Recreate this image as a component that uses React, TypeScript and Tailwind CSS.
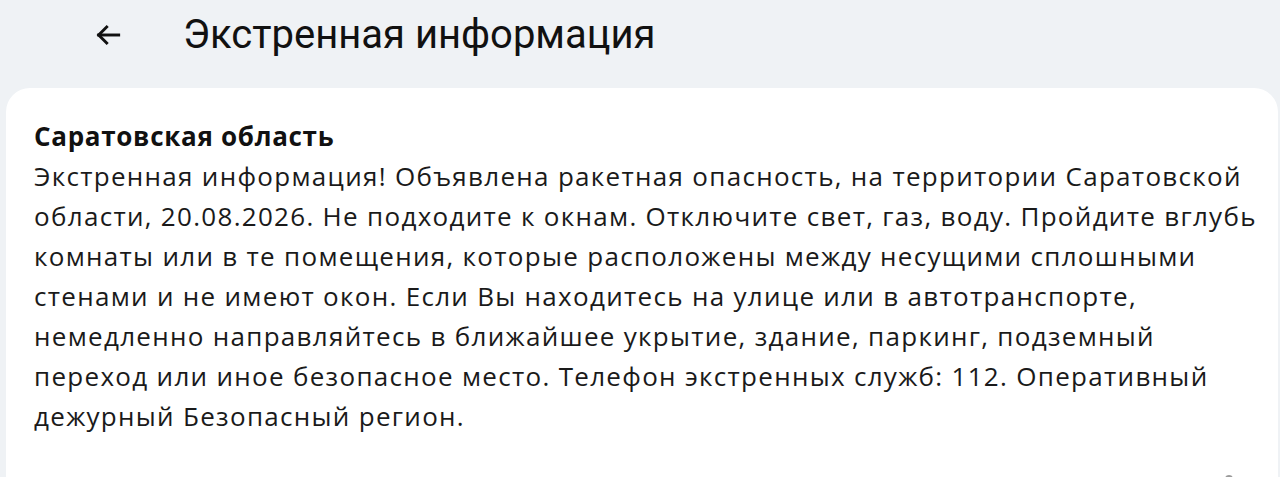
import React from 'react';

const lines = [
  'Экстренная информация! Объявлена ракетная опасность, на территории Саратовской',
  'области, 20.08.2026. Не подходите к окнам. Отключите свет, газ, воду. Пройдите вглубь',
  'комнаты или в те помещения, которые расположены между несущими сплошными',
  'стенами и не имеют окон. Если Вы находитесь на улице или в автотранспорте,',
  'немедленно направляйтесь в ближайшее укрытие, здание, паркинг, подземный',
  'переход или иное безопасное место. Телефон экстренных служб: 112. Оперативный',
  'дежурный Безопасный регион.',
];

export default function App() {
  return (
    <div className="w-[1280px] h-[477px] overflow-hidden bg-[#eff2f5] flex flex-col">
      <header className="h-[88px] flex items-center pl-[92px] pb-[18px] shrink-0">
        <svg width="32" height="32" viewBox="0 0 24 24" fill="none" stroke="#111" strokeWidth={2.2} strokeLinecap="square">
          <path d="M20 12H5" />
          <path d="M11 6l-6 6 6 6" />
        </svg>
        <h1 className="ml-[59px] text-[40px] text-[#111] font-['Roboto',sans-serif] font-normal leading-none">
          Экстренная информация
        </h1>
      </header>
      <div className="ml-[6px] mr-[2px] flex-1 bg-white rounded-t-[24px] pt-[28px] pl-[28px] relative">
        <h2 className="font-['Open_Sans',sans-serif] font-bold text-[26px] leading-[40px] tracking-[0.7px] text-[#111]">
          Саратовская область
        </h2>
        <p className="font-['Open_Sans',sans-serif] text-[26px] leading-[40px] tracking-[1.3px] text-[#1a1a1a]">
          {lines.map((l, i) => (
            <span key={i} className="block whitespace-nowrap">{l}</span>
          ))}
        </p>
        <div className="absolute right-[45px] bottom-[-6px] w-[8px] h-[8px] rounded-full bg-[#9a9a9a]" />
      </div>
    </div>
  );
}
